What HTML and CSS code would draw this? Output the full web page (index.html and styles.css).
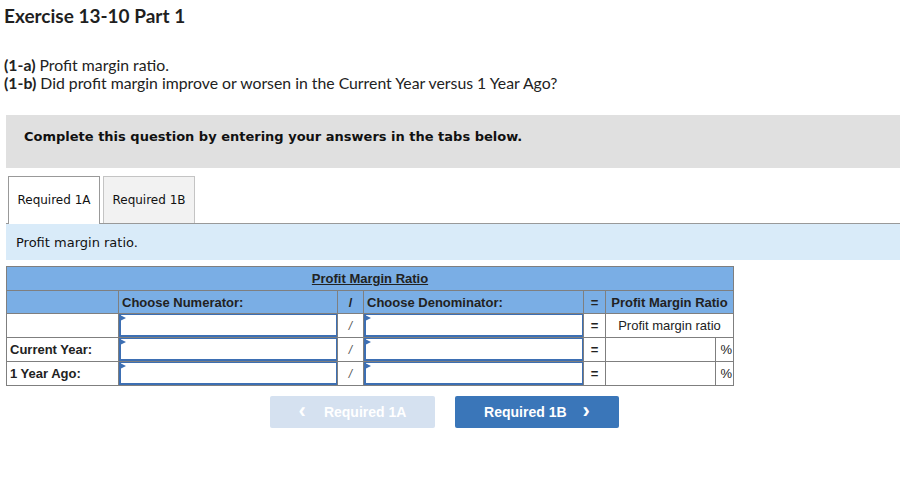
FILE: index.html
```html
<!DOCTYPE html>
<html lang="en">
<head>
<meta charset="utf-8">
<title>Exercise 13-10 Part 1</title>
<link rel="stylesheet" href="styles.css">
</head>
<body>
<h1 class="title">Exercise 13-10 Part 1</h1>
<div class="prompt">
  <p><b>(1-a)</b> Profit margin ratio.</p>
  <p><b>(1-b)</b> Did profit margin improve or worsen in the Current Year versus 1 Year Ago?</p>
</div>
<div class="instructions">Complete this question by entering your answers in the tabs below.</div>
<div class="tabs">
  <div class="tab active">Required 1A</div>
  <div class="tab">Required 1B</div>
</div>
<div class="panel">Profit margin ratio.</div>
<div class="grid">
  <div class="c title-cell span-all"><span>Profit Margin Ratio</span></div>
  <div class="c head"></div>
  <div class="c head">Choose Numerator:</div>
  <div class="c head center">/</div>
  <div class="c head">Choose Denominator:</div>
  <div class="c head center">=</div>
  <div class="c head center span2">Profit Margin Ratio</div>

  <div class="c"></div>
  <div class="c inp"><div class="field"></div></div>
  <div class="c center slash">/</div>
  <div class="c inp"><div class="field"></div></div>
  <div class="c center">=</div>
  <div class="c center span2 plain">Profit margin ratio</div>

  <div class="c label">Current Year:</div>
  <div class="c inp"><div class="field"></div></div>
  <div class="c center slash">/</div>
  <div class="c inp"><div class="field"></div></div>
  <div class="c center">=</div>
  <div class="c"></div>
  <div class="c pct">%</div>

  <div class="c label">1 Year Ago:</div>
  <div class="c inp"><div class="field"></div></div>
  <div class="c center slash">/</div>
  <div class="c inp"><div class="field"></div></div>
  <div class="c center">=</div>
  <div class="c"></div>
  <div class="c pct">%</div>
</div>
<div class="nav">
  <div class="btn disabled"><span class="chev">&lsaquo;</span>Required 1A</div>
  <div class="btn primary">Required 1B<span class="chev right">&rsaquo;</span></div>
</div>
</body>
</html>
```
FILE: styles.css
```css
* { box-sizing: border-box; }
body {
  margin: 0;
  background: #fff;
  color: #222;
  font-family: "Lato", "Open Sans", sans-serif;
}
.title {
  margin: 0;
  padding: 5px 0 0 4px;
  font-size: 19px;
  line-height: 22px;
  font-weight: 700;
  color: #1f1f1f;
}
.prompt {
  margin-top: 29px;
  padding-left: 4px;
  font-size: 15.8px;
  line-height: 18px;
  color: #222;
}
.prompt p { margin: 0; }
.instructions {
  margin: 23px 11px 0 6px;
  height: 53px;
  background: #e0e0e0;
  padding: 14px 0 0 18px;
  line-height: 16px;
  font-family: "DejaVu Sans", Verdana, sans-serif;
  font-weight: 700;
  font-size: 13px;
  color: #111;
}
.tabs {
  margin: 8px 11px 0 6px;
  display: flex;
  gap: 3px;
  padding-left: 2px;
  border-bottom: 1px solid #999;
  height: 48px;
}
.tab {
  width: 92px;
  height: 47px;
  display: flex;
  align-items: center;
  justify-content: center;
  font-family: "DejaVu Sans", Verdana, sans-serif;
  font-size: 12px;
  color: #111;
  background: #f2f2f2;
  border: 1px solid #c4c4c4;
  border-bottom: none;
}
.tab.active {
  background: #fff;
  border-color: #999;
  height: 48px;
  padding-bottom: 1px;
}
.panel {
  margin: 0 11px 0 6px;
  height: 36px;
  background: #d9ebf9;
  padding-left: 10px;
  display: flex;
  align-items: center;
  font-family: "DejaVu Sans", Verdana, sans-serif;
  font-size: 13px;
  color: #111;
}
.grid {
  margin: 6px 0 0 6px;
  width: 728px;
  display: grid;
  grid-template-columns: 111px 218px 25px 219px 21px 109px 17px;
  grid-template-rows: 23px 22px 23px 23px 23px;
  gap: 1px;
  padding: 1px;
  background: #7f7f7f;
  font-family: "Liberation Sans", Arial, sans-serif;
  font-size: 13px;
  color: #222;
}
.c {
  background: #fff;
  display: flex;
  align-items: center;
  padding: 0 3px;
  font-weight: 700;
}
.span-all { grid-column: 1 / -1; }
.span2 { grid-column: span 2; }
.center { justify-content: center; padding: 0; }
.title-cell {
  background: #7aaee5;
  justify-content: center;
}
.title-cell span { text-decoration: underline; }
.head { background: #7aaee5; }
.plain { font-weight: 400; }
.slash { font-weight: 400; font-style: italic; color: #555; font-size: 12px; }
.label { font-weight: 700; }
.pct { font-weight: 400; justify-content: flex-end; padding: 0 1px 0 0; }
.inp { padding: 0; align-items: stretch; }
.field {
  flex: 1;
  position: relative;
  background: #fff;
  border: 2px solid #3d6fb3;
  border-top-width: 1px;
  border-right-width: 1px;
}
.field::before {
  content: "";
  position: absolute;
  left: -1px;
  top: 0;
  border-left: 6px solid #3d6fb3;
  border-top: 3px solid transparent;
  border-bottom: 3px solid transparent;
}
.nav {
  display: flex;
  gap: 20px;
  margin: 10px 0 0 270px;
}
.btn {
  width: 165px;
  height: 32px;
  border-radius: 2px;
  display: flex;
  align-items: center;
  justify-content: center;
  font-family: "Liberation Sans", Arial, sans-serif;
  font-weight: 700;
  font-size: 14px;
  color: #fff;
}
.btn.disabled { background: #d5e1f0; }
.btn.primary { background: #3a76b9; width: 164px; }
.chev { font-size: 22px; line-height: 1; margin: -3px 18px 0 0; }
.chev.right { margin: -3px 0 0 16px; }
```
